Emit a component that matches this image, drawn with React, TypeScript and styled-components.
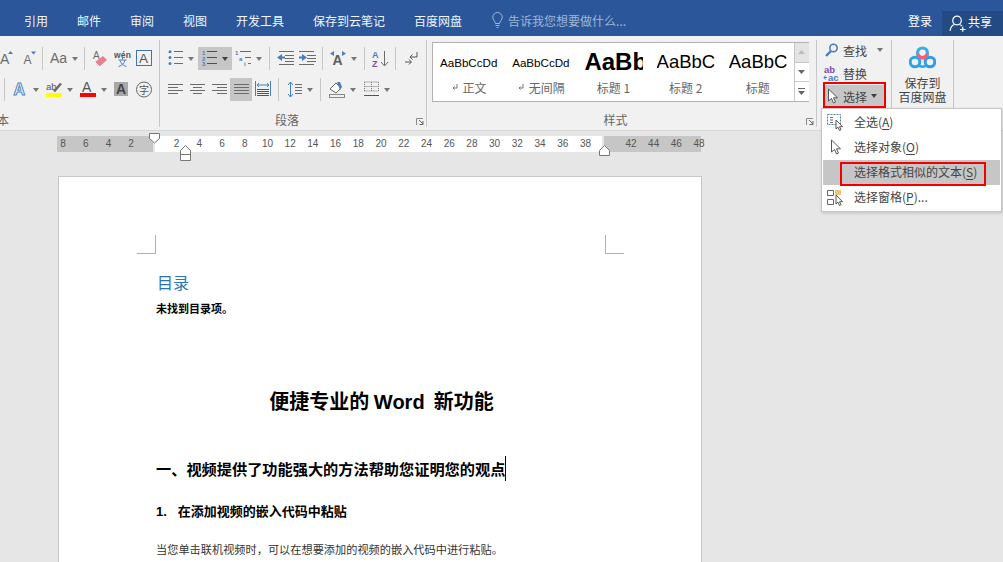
import React, { ReactNode } from 'react';
import styled, { createGlobalStyle } from 'styled-components';

const CJK = '"Noto Sans CJK SC", "Liberation Sans", sans-serif';
const GRAY = '#6b6b6b';
const BLUE = '#4a7ebb';
const RED = '#f00000';

const GlobalStyle = createGlobalStyle`
  html, body {
    margin: 0;
    height: 562px;
    overflow: hidden;
    background: #e6e6e6;
    font-family: ${CJK};
  }
  svg text {
    font-family: "Liberation Sans", sans-serif;
  }
`;

const Shell = styled('div')`
  position: relative;
  width: 1003px;
  height: 562px;
  overflow: hidden;
  background: #e6e6e6;
`;

/* title bar */
const TopBar = styled('div')`
  display: flex;
  align-items: center;
  gap: 29px;
  box-sizing: border-box;
  height: 36px;
  padding: 4px 0 0 24px;
  background: #2b579a;
  color: #fff;
  font-size: 12px;
`;

const Tab = styled('span')`
  white-space: nowrap;
  color: #f2f5fa;
`;

const TellMe = styled('div')`
  display: flex;
  align-items: center;
  gap: 5px;
  margin-left: 1px;
  color: #9fb6d6;
`;

const Login = styled('span')`
  margin-left: auto;
  margin-right: -19px;
`;

const ShareBox = styled('div')`
  display: flex;
  align-items: center;
  gap: 2px;
  align-self: flex-end;
  box-sizing: border-box;
  width: 61px;
  height: 25px;
  padding-left: 7px;
  background: #234a83;
`;

const ShareText = styled('span')`
  margin-top: -4px;
`;

/* ribbon */
const Ribbon = styled('div')`
  display: flex;
  box-sizing: border-box;
  height: 95px;
  padding-top: 4px;
  background: #f1f1f1;
  border-bottom: 1px solid #d6d6d6;
`;

const Group = styled('div')<{ $w: number; $end?: boolean }>`
  position: relative;
  display: flex;
  flex-direction: column;
  flex: none;
  box-sizing: border-box;
  width: ${p => p.$w}px;
  height: 87px;
  padding: 7px ${p => (p.$end ? 4 : 0)}px 0 ${p => (p.$end ? 0 : 4)}px;
  border-right: 1px solid #c8c8c8;
  overflow: hidden;
`;

const Row = styled('div')<{ $end?: boolean }>`
  display: flex;
  align-items: center;
  justify-content: ${p => (p.$end ? 'flex-end' : 'flex-start')};
  height: 23px;
  margin-bottom: 8px;
`;

const Tool = styled('div')<{ $w?: number; $on?: boolean }>`
  display: flex;
  align-items: center;
  justify-content: center;
  gap: 5px;
  flex: none;
  box-sizing: border-box;
  width: ${p => p.$w ?? 22}px;
  height: 23px;
  background: ${p => (p.$on ? '#c6c6c6' : 'transparent')};
`;

const Caret = styled('i')<{ $dark?: boolean }>`
  display: block;
  flex: none;
  width: 0;
  height: 0;
  border-left: 3.5px solid transparent;
  border-right: 3.5px solid transparent;
  border-top: 4px solid ${p => (p.$dark ? '#404040' : '#777')};
`;

const Sep = styled('i')<{ $l?: number; $r?: number }>`
  display: block;
  flex: none;
  width: 1px;
  height: 23px;
  margin: 0 ${p => p.$r ?? 4}px 0 ${p => p.$l ?? 4}px;
  background: #c8c8c8;
`;

const GroupLabel = styled('div')<{ $cut?: boolean }>`
  margin-top: auto;
  margin-left: ${p => (p.$cut ? '-3px' : '0')};
  padding-right: ${p => (p.$cut ? '0' : '16px')};
  height: 16px;
  line-height: 18px;
  font-size: 12px;
  text-align: ${p => (p.$cut ? 'left' : 'center')};
  color: #666;
`;

const LauncherSlot = styled('div')`
  position: absolute;
  right: 2px;
  bottom: 2px;
`;

/* style gallery */
const Gallery = styled('div')`
  display: flex;
  box-sizing: border-box;
  width: 377px;
  height: 60px;
  margin: -5px 0 0 1px;
  background: #fff;
  border: 1px solid #b1b1b1;
`;

const StyleCard = styled('div')`
  display: flex;
  flex-direction: column;
  align-items: center;
  flex: none;
  box-sizing: border-box;
  width: 72.2px;
  padding: 0 7px;
`;

const Preview = styled('div')<{ $size: number; $bold?: boolean }>`
  display: flex;
  align-items: center;
  justify-content: flex-start;
  width: 100%;
  height: 38px;
  overflow: hidden;
  font-family: "Liberation Sans", sans-serif;
  font-size: ${p => p.$size}px;
  font-weight: ${p => (p.$bold ? 700 : 400)};
  color: #000;
  white-space: nowrap;
`;

const PreviewLabel = styled('div')`
  display: flex;
  align-items: center;
  gap: 5px;
  height: 12px;
  font-size: 12px;
  color: #666;
  white-space: nowrap;
`;

const GalleryScroll = styled('div')`
  display: flex;
  flex-direction: column;
  flex: none;
  width: 14px;
  margin-left: auto;
  border-left: 1px solid #c6c6c6;
`;

const ScrollBtn = styled('div')<{ $off?: boolean }>`
  display: flex;
  align-items: center;
  justify-content: center;
  flex: 1;
  background: ${p => (p.$off ? '#e4e4e4' : '#fff')};
  border-bottom: 1px solid #c6c6c6;
  &:last-child { border-bottom: 0; }
`;

/* editing group */
const EditColumn = styled('div')`
  display: flex;
  flex-direction: column;
  width: 59px;
  margin: -8px 0 0 4px;
`;

const EditButton = styled('div')<{ $on?: boolean }>`
  display: flex;
  align-items: center;
  gap: 4px;
  box-sizing: border-box;
  height: 23px;
  padding-bottom: 1px;
  font-size: 12px;
  color: #444;
  white-space: nowrap;
  background: ${p => (p.$on ? '#c6c6c6' : 'transparent')};
`;

const EditIcon = styled('div')`
  display: flex;
  justify-content: flex-end;
  flex: none;
  width: 14px;
`;

const EditCaret = styled('span')<{ $x: number }>`
  margin-left: ${p => p.$x}px;
`;

const SaveButton = styled('div')`
  display: flex;
  flex-direction: column;
  align-items: center;
  margin: -1px 0 0 -4px;
  font-size: 12px;
  line-height: 14px;
  color: #444;
  text-align: center;
`;

const SaveCaption = styled('div')`
  margin-top: 7px;
`;

/* overlays: red marks and the open menu */
const RedMark = styled('div')`
  position: absolute;
  left: 823px;
  top: 82px;
  width: 63px;
  height: 26px;
  box-sizing: border-box;
  border: 2px solid ${RED};
  z-index: 3;
`;

const Menu = styled('div')`
  position: absolute;
  left: 821px;
  top: 108px;
  width: 181px;
  box-sizing: border-box;
  padding: 1px;
  background: #fff;
  border: 1px solid #c6c6c6;
  box-shadow: 1px 1px 3px rgba(0, 0, 0, 0.18);
  z-index: 2;
`;

const MenuItem = styled('div')<{ $on?: boolean }>`
  position: relative;
  display: flex;
  align-items: center;
  box-sizing: border-box;
  height: 25px;
  padding: 0 0 2px 31px;
  font-size: 12px;
  color: #444;
  background: ${p => (p.$on ? '#c6c6c6' : 'transparent')};
  u { text-underline-offset: 2px; }
`;

const MenuIcon = styled('div')<{ $x?: number }>`
  position: absolute;
  left: ${p => p.$x ?? 4}px;
  top: 4px;
`;

const MenuRed = styled('div')`
  position: absolute;
  left: 17px;
  top: 2px;
  width: 146px;
  height: 24px;
  box-sizing: border-box;
  border: 2px solid ${RED};
`;

/* ruler */
const Ruler = styled('div')`
  position: relative;
  display: flex;
  gap: 2px;
  width: 644px;
  height: 16px;
  margin: 5px 0 0 57px;
`;

const RulerPart = styled('div')<{ $w: number; $white?: boolean }>`
  flex: none;
  width: ${p => p.$w}px;
  background: ${p => (p.$white ? '#fff' : '#c6c6c6')};
`;

const Ticks = styled('div')`
  position: absolute;
  top: 0;
  left: -5.4px;
  display: flex;
`;

const Tick = styled('span')`
  flex: none;
  width: 22.72px;
  height: 16px;
  line-height: 16px;
  font-family: "Liberation Sans", sans-serif;
  font-size: 10px;
  text-align: center;
  color: #555;
`;

const Marker = styled('svg')<{ $x: number; $y: number }>`
  position: absolute;
  left: ${p => p.$x}px;
  top: ${p => p.$y}px;
`;

/* document */
const Page = styled('div')`
  box-sizing: border-box;
  width: 644px;
  height: 400px;
  margin: 24px 0 0 58px;
  padding: 58px 0 0 97px;
  background: #fff;
  border: 1px solid #c6c6c6;
  border-bottom: 0;
  color: #000;
`;

const CropRow = styled('div')`
  display: flex;
  justify-content: space-between;
  width: 487px;
  height: 19px;
  margin-left: -19px;
`;

const CropMark = styled('i')<{ $right?: boolean }>`
  display: block;
  box-sizing: border-box;
  width: 19px;
  height: 19px;
  border-bottom: 1px solid #b0b0b0;
  ${p => (p.$right ? 'border-left' : 'border-right')}: 1px solid #b0b0b0;
`;

const TocTitle = styled('div')`
  margin-top: 16px;
  padding-left: 1px;
  font-size: 16px;
  line-height: 24px;
  color: #2e74b5;
`;

const TocEmpty = styled('div')`
  margin-top: 6px;
  font-size: 11px;
  line-height: 16px;
  font-weight: 700;
`;

const DocTitle = styled('div')`
  width: 451px;
  margin-top: 71px;
  font-size: 20px;
  line-height: 28px;
  font-weight: 700;
  text-align: center;
  white-space: pre;
`;

const Latin = styled('span')`
  font-family: "Liberation Sans", sans-serif;
`;

const Heading = styled('div')`
  margin-top: 40px;
  height: 24px;
`;

const HeadingText = styled('span')`
  display: inline-block;
  height: 25px;
  font-size: 15.2px;
  line-height: 25px;
  font-weight: 700;
  border-right: 1px solid #000;
  white-space: nowrap;
`;

const SubHeading = styled('div')`
  display: flex;
  align-items: baseline;
  gap: 11px;
  margin-top: 21px;
  font-size: 13px;
  line-height: 20px;
  font-weight: 700;
`;

const BodyText = styled('div')`
  margin-top: 19px;
  font-size: 11.2px;
  line-height: 16px;
  color: #333;
  white-space: nowrap;
`;

/* icons */
const IconSvg = styled('svg')`
  display: block;
  flex: none;
`;

function Icon({ w = 15, h = 17, children }: { w?: number; h?: number; children: ReactNode }) {
  return (
    <IconSvg width={w} height={h} viewBox={`0 0 ${w} ${h}`} fill="none">
      {children}
    </IconSvg>
  );
}

function Lines({ x, w, ys, c = GRAY }: { x: number; w: number; ys: number[]; c?: string }) {
  return (
    <>
      {ys.map(y => <path key={y} d={`M${x} ${y + 0.5}h${w}`} stroke={c} />)}
    </>
  );
}

const GrowFont = () => (
  <Icon w={14}>
    <text x="0" y="14" fontSize="14" fill={GRAY}>A</text>
    <path d="M8 4 10.500 1 13 4z" fill={BLUE} />
  </Icon>
);

const ShrinkFont = () => (
  <Icon w={15}>
    <text x="2.500" y="14" fontSize="12" fill={GRAY}>A</text>
    <path d="M10 1.500h5l-2.500 3z" fill={BLUE} />
  </Icon>
);

const ChangeCase = () => (
  <Icon w={17}>
    <text x="0" y="13" fontSize="14" fill={GRAY}>Aa</text>
  </Icon>
);

const ClearFormat = () => (
  <Icon w={16}>
    <text x="1" y="9" fontSize="10" fill={GRAY}>A</text>
    <path d="M3 12 11 6l4 4-7 6H6z" fill="#e9808f" />
    <path d="M3 12l4 4" stroke="#f6f6f6" />
  </Icon>
);

const Phonetic = () => (
  <Icon w={17}>
    <text x="0" y="7.500" fontSize="8.500" fontWeight="700" fill="#555" textLength="17">wén</text>
    <path d="M8.500 8v1.500M4.500 10h8M11 10.500c-1 3-3 5-6.500 6M6 10.500c1 3 3 5 6.500 6" stroke={BLUE} />
  </Icon>
);

const BoxA = () => (
  <Icon w={16}>
    <rect x="0.500" y="0.500" width="15" height="15" stroke="#3f74b1" />
    <text x="3" y="13" fontSize="13.500" fill="#555">A</text>
  </Icon>
);

const Bullets = () => (
  <Icon>
    <circle cx="2" cy="1.800" r="1.500" fill={BLUE} />
    <circle cx="2" cy="7.500" r="1.500" fill={BLUE} />
    <circle cx="2" cy="13.500" r="1.500" fill={BLUE} />
    <Lines x={6} w={9} ys={[1, 7, 13]} />
  </Icon>
);

const Numbering = () => (
  <Icon>
    <text x="0" y="5" fontSize="6" fontWeight="700" fill={BLUE}>1</text>
    <text x="0" y="10.500" fontSize="6" fontWeight="700" fill={BLUE}>2</text>
    <text x="0" y="16" fontSize="6" fontWeight="700" fill={BLUE}>3</text>
    <Lines x={5} w={10} ys={[1, 7, 13]} c="#4f4f4f" />
  </Icon>
);

const Multilevel = () => (
  <Icon w={16}>
    <text x="0" y="5" fontSize="6" fontWeight="700" fill={BLUE}>1</text>
    <text x="4" y="10.500" fontSize="6" fontWeight="700" fill={BLUE}>a</text>
    <text x="9" y="16" fontSize="6" fontWeight="700" fill={BLUE}>i</text>
    <Lines x={5} w={11} ys={[1]} />
    <Lines x={10} w={6} ys={[7]} />
    <Lines x={13} w={3} ys={[13]} />
  </Icon>
);

const Outdent = () => (
  <Icon w={17}>
    <Lines x={2} w={15} ys={[1, 14]} />
    <Lines x={8} w={9} ys={[5, 8, 11]} />
    <path d="M0 7.500 5 4v2.500h3v2H5V11z" fill={BLUE} />
  </Icon>
);

const Indent = () => (
  <Icon w={17}>
    <Lines x={0} w={15} ys={[1, 14]} />
    <Lines x={8} w={9} ys={[5, 8, 11]} />
    <path d="M8 7.500 3 4v2.500H0v2h3V11z" fill={BLUE} />
  </Icon>
);

const AsianLayout = () => (
  <Icon w={16}>
    <text x="2.500" y="15" fontSize="14" fontWeight="700" fill="#5c5c5c">A</text>
    <path d="M0 3.500 4 1v5zM16 3.500 12 1v5z" fill={BLUE} />
  </Icon>
);

const SortAZ = () => (
  <Icon w={17}>
    <text x="0" y="7.500" fontSize="9" fontWeight="700" fill={BLUE}>A</text>
    <text x="0" y="16.500" fontSize="9" fontWeight="700" fill="#7d4ea8">Z</text>
    <path d="M12.500 1v14M9 12l3.500 4 3.500-4" stroke={GRAY} />
  </Icon>
);

const ShowMarks = () => (
  <Icon w={13}>
    <path d="M12 2v5H5M7.500 4.500 5 7l2.500 2.500M0 12h6M4 9.500 6.500 12 4 14.500" stroke="#555" />
  </Icon>
);

const TextEffect = () => (
  <Icon w={15}>
    <text x="0.500" y="14" fontSize="16" fontWeight="700" fill="#fff" stroke="#4f86c6" strokeWidth="1">A</text>
  </Icon>
);

const Highlighter = () => (
  <Icon w={16}>
    <text x="0" y="8.500" fontSize="9.500" fill="#555">ab</text>
    <path d="M8 10.500 15 2.500" stroke="#6b6b6b" strokeWidth="2.500" />
    <rect y="12" width="16" height="4" fill="#ffff00" />
  </Icon>
);

const FontColor = () => (
  <Icon w={16}>
    <text x="2" y="11" fontSize="14" fill="#555">A</text>
    <rect y="12" width="16" height="4" fill="#ff0000" />
  </Icon>
);

const CharShade = () => (
  <Icon w={14}>
    <rect y="1" width="14" height="14" fill="#a8a8a8" />
    <text x="2" y="13" fontSize="14" fontWeight="700" fill="#444">A</text>
  </Icon>
);

const Enclosed = () => (
  <Icon w={16}>
    <circle cx="8" cy="8.500" r="7.500" stroke="#666" />
    <text x="3" y="12.500" fontSize="10" fill="#555" style={{ fontFamily: CJK }}>字</text>
  </Icon>
);

const Align = ({ w, x }: { w: number[]; x: number[] }) => (
  <Icon>
    {[3, 6, 9, 12].map((y, i) => (
      <path key={y} d={`M${x[i]} ${y + 0.5}h${w[i]}`} stroke={GRAY} />
    ))}
  </Icon>
);

const Distribute = () => (
  <Icon w={16}>
    <path d="M.5 0v15M15.500 0v15" stroke={BLUE} />
    <path d="M2 4h12M4 2 2 4l2 2M12 2l2 2-2 2" stroke={BLUE} />
    <Lines x={2} w={12} ys={[8, 10, 12, 14]} c="#555" />
  </Icon>
);

const LineSpacing = () => (
  <Icon>
    <path d="M3.500 1v15M1 4l2.500-3L6 4M1 13l2.500 3L6 13" stroke={BLUE} />
    <Lines x={8} w={7} ys={[3, 6, 9, 12]} />
  </Icon>
);

const Shading = () => (
  <Icon w={16}>
    <path d="M1 8 7 2l5 5-5 5z" stroke="#666" fill="#fff" />
    <path d="M8 1h3l2 5-2 3z" fill={BLUE} />
    <rect x="0.500" y="13.500" width="15" height="3" stroke="#888" />
  </Icon>
);

const Borders = () => (
  <Icon>
    <path d="M.5 1h14M.5 5.500h14M.5 10h14M.5 1v10M7.500 1v10M14.500 1v10" stroke="#777" strokeDasharray="1 1" />
    <path d="M0 14.500h15" stroke="#555" />
  </Icon>
);

const ReturnMark = () => (
  <Icon w={6} h={8}>
    <path d="M5 1v4H1M2.500 3.500 1 5l1.500 1.500" stroke="#777" />
  </Icon>
);

const Launcher = () => (
  <Icon w={8} h={7}>
    <path d="M.5 7V.5H7" stroke="#888" />
    <path d="M3 2l4 4M7 3v3.500H3.500" stroke="#666" />
  </Icon>
);

const Magnifier = () => (
  <Icon w={14} h={14}>
    <circle cx="8.500" cy="5" r="3.700" stroke={BLUE} strokeWidth="1.600" />
    <path d="M6 8 1 13" stroke={BLUE} strokeWidth="2.400" />
  </Icon>
);

const ReplaceIcon = () => (
  <Icon w={16} h={15}>
    <text x="1" y="7" fontSize="9.500" fontWeight="700" fill="#7d4ea8">ab</text>
    <text x="5" y="14.500" fontSize="9.500" fontWeight="700" fill={BLUE}>ac</text>
    <path d="M1 11.500h3M2.500 9.500l-1.500 2 1.500 2" stroke={BLUE} />
  </Icon>
);

const Cursor = () => (
  <Icon w={12} h={16}>
    <path d="M1.500 1v12l3-2.500L6.500 15l2-1-2-4.200h4z" fill="#fff" stroke="#555" />
  </Icon>
);

const BaiduLogo = () => (
  <Icon w={27} h={23}>
    <circle cx="6" cy="16" r="4.800" stroke="#29a5e8" strokeWidth="3" />
    <circle cx="21" cy="16" r="4.800" stroke="#2f9bea" strokeWidth="3" />
    <path d="M10 19.500c1.500 1.500 5.500 1.500 7 0" stroke="#29a5e8" strokeWidth="2.500" />
    <circle cx="13.500" cy="7" r="5" stroke="#35b0e6" strokeWidth="3.200" />
    <path d="M8.700 8a5 5 0 0 0 9.600 0" stroke="#f2607e" strokeWidth="3.200" />
  </Icon>
);

const BulbIcon = () => (
  <Icon w={11} h={16}>
    <path d="M3.500 11.500C3 9 .8 8 .8 5.200a4.700 4.700 0 0 1 9.400 0C10.200 8 8 9 7.500 11.500z" stroke="#9fb6d6" />
    <path d="M3.500 13.500h4M4.500 15.500h2" stroke="#9fb6d6" />
  </Icon>
);

const PersonIcon = () => (
  <Icon w={17} h={17}>
    <circle cx="8" cy="5.500" r="4.300" stroke="#fff" strokeWidth="1.200" />
    <path d="M1 16c.5-3.500 2.500-6 4.500-6.500M10.500 9.500c1 .3 1.800.8 2.500 1.500M11 14.500h5.500M13.750 11.800v5" stroke="#fff" strokeWidth="1.200" />
  </Icon>
);

const SelectAllIcon = () => (
  <Icon w={16} h={17}>
    <rect x="0.500" y="0.500" width="13" height="10" stroke={BLUE} strokeDasharray="2 1" />
    <path d="M3 3.500h3M3 6h3M3 8.500h3" stroke={GRAY} />
    <path d="M9 6v9l2-1.800 1.500 3.300 1.500-.8-1.500-3h3z" fill="#fff" stroke="#555" />
  </Icon>
);

const PaneIcon = () => (
  <Icon w={16} h={17}>
    <path d="M.5 1.500h6v5h-6zM.5 10.500h6v5h-6z" stroke="#666" />
    <rect x="8" y="1" width="6" height="5" fill="#eec17f" />
    <path d="M9 6v9l2-1.800 1.500 3.300 1.500-.8-1.500-3h3z" fill="#fff" stroke="#555" />
  </Icon>
);

const UpArrow = () => (
  <Icon w={7} h={4}><path d="M0 4 3.500 0 7 4z" fill="#bdbdbd" /></Icon>
);

const DownArrow = () => (
  <Icon w={7} h={4}><path d="M0 0h7L3.500 4z" fill="#666" /></Icon>
);

const MoreArrow = () => (
  <Icon w={7} h={7}>
    <path d="M0 .5h7" stroke="#666" />
    <path d="M0 3h7L3.500 7z" fill="#666" />
  </Icon>
);

const tabs = ['引用', '邮件', '审阅', '视图', '开发工具', '保存到云笔记', '百度网盘'];
const rulerNumbers = ['8', '6', '4', '2', '', '2', '4', '6', '8', '10', '12', '14', '16', '18', '20', '22', '24', '26', '28', '30', '32', '34', '36', '38', '', '42', '44', '46', '48'];

const styleCards = [
  { sample: 'AaBbCcDd', size: 11.6, label: '正文', mark: true },
  { sample: 'AaBbCcDd', size: 11.6, label: '无间隔', mark: true },
  { sample: 'AaBb', size: 24, bold: true, label: '标题 1' },
  { sample: 'AaBbC', size: 18.5, label: '标题 2' },
  { sample: 'AaBbC', size: 18.5, label: '标题' },
];

function App() {
  return (
    <Shell>
      <GlobalStyle />
      <TopBar>
        {tabs.map(t => <Tab key={t}>{t}</Tab>)}
        <TellMe><BulbIcon />告诉我您想要做什么...</TellMe>
        <Login>登录</Login>
        <ShareBox><PersonIcon /><ShareText>共享</ShareText></ShareBox>
      </TopBar>

      <Ribbon>
        <Group $w={160} $end>
          <Row $end>
            <Tool><GrowFont /></Tool>
            <Tool $w={20}><ShrinkFont /></Tool>
            <Sep $l={4} />
            <Tool $w={33}><ChangeCase /><Caret /></Tool>
            <Sep />
            <Tool><ClearFormat /></Tool>
            <Tool><Phonetic /></Tool>
            <Tool><BoxA /></Tool>
          </Row>
          <Row $end>
            <Sep $r={5} />
            <Tool $w={32}><TextEffect /><Caret /></Tool>
            <Tool $w={34}><Highlighter /><Caret /></Tool>
            <Tool $w={34}><FontColor /><Caret /></Tool>
            <Tool><CharShade /></Tool>
            <Tool $w={23}><Enclosed /></Tool>
          </Row>
          <GroupLabel $cut>本</GroupLabel>
          <LauncherSlot />
        </Group>

        <Group $w={267}>
          <Row>
            <Tool $w={34}><Bullets /><Caret /></Tool>
            <Tool $w={34} $on><Numbering /><Caret $dark /></Tool>
            <Tool $w={33}><Multilevel /><Caret /></Tool>
            <Sep />
            <Tool><Outdent /></Tool>
            <Tool><Indent /></Tool>
            <Sep />
            <Tool $w={33}><AsianLayout /><Caret /></Tool>
            <Sep />
            <Tool $w={23}><SortAZ /></Tool>
            <Sep $l={3} />
            <Tool><ShowMarks /></Tool>
          </Row>
          <Row>
            <Tool><Align x={[0, 0, 0, 0]} w={[15, 10, 15, 10]} /></Tool>
            <Tool><Align x={[0, 3, 0, 3]} w={[15, 9, 15, 9]} /></Tool>
            <Tool><Align x={[0, 5, 0, 5]} w={[15, 10, 15, 10]} /></Tool>
            <Tool $on><Align x={[0, 0, 0, 0]} w={[15, 15, 15, 15]} /></Tool>
            <Tool><Distribute /></Tool>
            <Sep />
            <Tool $w={33}><LineSpacing /><Caret /></Tool>
            <Sep />
            <Tool $w={35}><Shading /><Caret /></Tool>
            <Tool $w={34}><Borders /><Caret /></Tool>
          </Row>
          <GroupLabel>段落</GroupLabel>
          <LauncherSlot><Launcher /></LauncherSlot>
        </Group>

        <Group $w={390}>
          <Gallery>
            {styleCards.map(s => (
              <StyleCard key={s.label}>
                <Preview $size={s.size} $bold={s.bold}>{s.sample}</Preview>
                <PreviewLabel>{s.mark && <ReturnMark />}{s.label}</PreviewLabel>
              </StyleCard>
            ))}
            <GalleryScroll>
              <ScrollBtn $off><UpArrow /></ScrollBtn>
              <ScrollBtn><DownArrow /></ScrollBtn>
              <ScrollBtn><MoreArrow /></ScrollBtn>
            </GalleryScroll>
          </Gallery>
          <GroupLabel>样式</GroupLabel>
          <LauncherSlot><Launcher /></LauncherSlot>
        </Group>

        <Group $w={75}>
          <EditColumn>
            <EditButton><EditIcon><Magnifier /></EditIcon>查找<EditCaret $x={6}><Caret /></EditCaret></EditButton>
            <EditButton><EditIcon><ReplaceIcon /></EditIcon>替换</EditButton>
            <EditButton $on><EditIcon><Cursor /></EditIcon>选择<EditCaret $x={0}><Caret $dark /></EditCaret></EditButton>
          </EditColumn>
        </Group>

        <Group $w={62}>
          <SaveButton>
            <BaiduLogo />
            <SaveCaption>保存到<br />百度网盘</SaveCaption>
          </SaveButton>
        </Group>
      </Ribbon>

      <RedMark />
      <Menu>
        <MenuItem><MenuIcon><SelectAllIcon /></MenuIcon><span>全选(<u>A</u>)</span></MenuItem>
        <MenuItem><MenuIcon $x={7}><Cursor /></MenuIcon><span>选择对象(<u>O</u>)</span></MenuItem>
        <MenuItem $on><span>选择格式相似的文本(<u>S</u>)</span><MenuRed /></MenuItem>
        <MenuItem><MenuIcon><PaneIcon /></MenuIcon><span>选择窗格(<u>P</u>)...</span></MenuItem>
      </Menu>

      <Ruler>
        <RulerPart $w={96} />
        <RulerPart $w={447} $white />
        <RulerPart $w={97} />
        <Ticks>
          {rulerNumbers.map((n, i) => <Tick key={i}>{n}</Tick>)}
        </Ticks>
        <Marker $x={92} $y={-3} width="12" height="11" viewBox="0 0 12 11">
          <path d="M.5.5h10v5l-5 4.500-5-4.500z" fill="#fff" stroke="#777" />
        </Marker>
        <Marker $x={123} $y={9} width="12" height="16" viewBox="0 0 12 16">
          <path d="M.5 15.500v-10l5-5 5 5v10zM.5 9.500h10" fill="#fff" stroke="#777" />
        </Marker>
        <Marker $x={542} $y={9} width="12" height="11" viewBox="0 0 12 11">
          <path d="M.5 10.500v-5l5-5 5 5v5z" fill="#fff" stroke="#777" />
        </Marker>
      </Ruler>

      <Page>
        <CropRow><CropMark /><CropMark $right /></CropRow>
        <TocTitle>目录</TocTitle>
        <TocEmpty>未找到目录项。</TocEmpty>
        <DocTitle>便捷专业的 <Latin>Word</Latin>  新功能</DocTitle>
        <Heading><HeadingText>一、视频提供了功能强大的方法帮助您证明您的观点</HeadingText></Heading>
        <SubHeading><Latin>1.</Latin><span>在添加视频的嵌入代码中粘贴</span></SubHeading>
        <BodyText>当您单击联机视频时，可以在想要添加的视频的嵌入代码中进行粘贴。</BodyText>
      </Page>
    </Shell>
  );
}

export default App;
